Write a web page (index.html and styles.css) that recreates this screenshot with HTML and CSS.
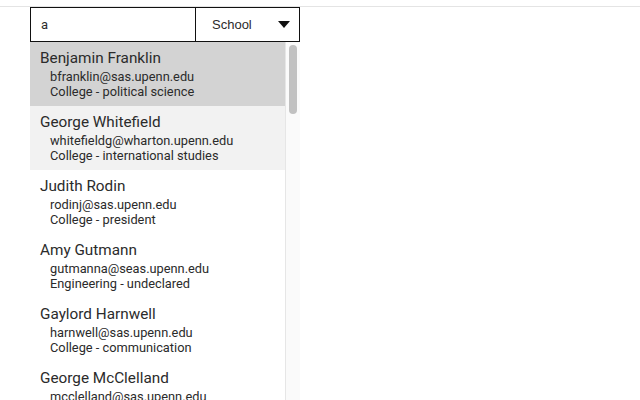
FILE: index.html
```html
<!DOCTYPE html>
<html>
<head>
<meta charset="utf-8">
<link rel="stylesheet" href="styles.css">
</head>
<body>
<div class="topbar"></div>
<div class="picker">
  <div class="search">
    <div class="query">a</div>
    <div class="select">
      <span class="select-label">School</span>
      <svg class="caret" width="12" height="7" viewBox="0 0 12 7"><path d="M0 0 L12 0 L6 7 Z" fill="#111"/></svg>
    </div>
  </div>
  <div class="results">
    <div class="items">
      <div class="item selected">
        <div class="name">Benjamin Franklin</div>
        <div class="detail">bfranklin@sas.upenn.edu</div>
        <div class="detail">College - political science</div>
      </div>
      <div class="item hover">
        <div class="name">George Whitefield</div>
        <div class="detail">whitefieldg@wharton.upenn.edu</div>
        <div class="detail">College - international studies</div>
      </div>
      <div class="item">
        <div class="name">Judith Rodin</div>
        <div class="detail">rodinj@sas.upenn.edu</div>
        <div class="detail">College - president</div>
      </div>
      <div class="item">
        <div class="name">Amy Gutmann</div>
        <div class="detail">gutmanna@seas.upenn.edu</div>
        <div class="detail">Engineering - undeclared</div>
      </div>
      <div class="item">
        <div class="name">Gaylord Harnwell</div>
        <div class="detail">harnwell@sas.upenn.edu</div>
        <div class="detail">College - communication</div>
      </div>
      <div class="item">
        <div class="name">George McClelland</div>
        <div class="detail">mcclelland@sas.upenn.edu</div>
        <div class="detail">College - history</div>
      </div>
    </div>
    <div class="track"><div class="thumb"></div></div>
  </div>
</div>
</body>
</html>
```
FILE: styles.css
```css
html, body {
  margin: 0;
  padding: 0;
  background: #fff;
  font-family: Roboto, "Liberation Sans", sans-serif;
  color: #2b2b2b;
  overflow: hidden;
  height: 400px;
}
.topbar {
  height: 6px;
  border-bottom: 1px solid #e4e4e4;
}
.picker {
  margin-left: 30px;
  width: 270px;
}
.search {
  display: flex;
  height: 33px;
  border: 1px solid #111;
  box-sizing: content-box;
}
.query {
  flex: 1;
  padding-left: 10px;
  font-size: 13px;
  line-height: 33px;
  border-right: 1px solid #111;
}
.select {
  width: 103px;
  display: flex;
  align-items: center;
  justify-content: space-between;
  padding: 0 9px 0 16px;
  box-sizing: border-box;
  font-family: "Liberation Sans", Arial, sans-serif;
  font-size: 13px;
}
.results {
  display: flex;
  height: 358px;
  overflow: hidden;
}
.items {
  width: 255px;
  flex: none;
}
.item {
  height: 64px;
  box-sizing: border-box;
  padding: 6px 10px 0;
}
.item.selected { background: #d3d3d3; }
.item.hover { background: #f2f2f2; }
.name {
  font-size: 15.3px;
  line-height: 20px;
  margin-bottom: 1px;
}
.detail {
  font-size: 12.8px;
  line-height: 15px;
  padding-left: 10px;
}
.track {
  width: 13px;
  border-left: 1px solid #e6e6e6;
  border-right: 1px solid #e6e6e6;
  background: #fafafa;
  flex: none;
  padding: 3px 2px 0 3px;
  box-sizing: content-box;
}
.thumb {
  width: 8px;
  height: 69px;
  border-radius: 4px;
  background: #c1c1c1;
}
```
